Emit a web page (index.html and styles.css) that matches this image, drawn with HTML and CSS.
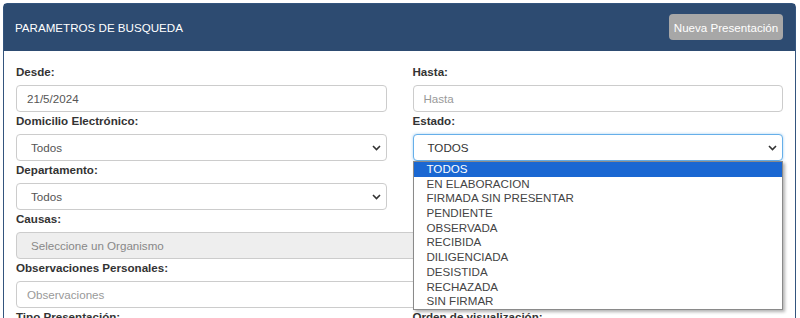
FILE: index.html
```html
<!doctype html>
<html>
	<head>
		<meta charset="utf-8" />
		<title>Parametros de busqueda</title>
		<link rel="stylesheet" href="styles.css">
	</head>
	<body>
		<div class="panel">
			<div class="panel-heading">
				<h3>PARAMETROS DE BUSQUEDA</h3>
				<button type="button" class="btn-new">Nueva Presentación</button>
			</div>
			<form class="panel-body">
				<div class="field">
					<label>Desde:</label>
					<div class="control">21/5/2024</div>
				</div>
				<div class="field">
					<label>Hasta:</label>
					<div class="control placeholder">Hasta</div>
				</div>

				<div class="field">
					<label>Domicilio Electrónico:</label>
					<div class="control select">
						<span>Todos</span>
						<svg width="9" height="6" viewBox="0 0 9 6"><path d="M1 1l3.5 3.5L8 1" fill="none" stroke="#333" stroke-width="1.6"/></svg>
					</div>
				</div>
				<div class="field dropdown">
					<label>Estado:</label>
					<div class="control select focus">
						<span>TODOS</span>
						<svg width="9" height="6" viewBox="0 0 9 6"><path d="M1 1l3.5 3.5L8 1" fill="none" stroke="#333" stroke-width="1.6"/></svg>
					</div>
					<ul class="options">
						<li class="active">TODOS</li>
						<li>EN ELABORACION</li>
						<li>FIRMADA SIN PRESENTAR</li>
						<li>PENDIENTE</li>
						<li>OBSERVADA</li>
						<li>RECIBIDA</li>
						<li>DILIGENCIADA</li>
						<li>DESISTIDA</li>
						<li>RECHAZADA</li>
						<li>SIN FIRMAR</li>
					</ul>
				</div>

				<div class="field">
					<label>Departamento:</label>
					<div class="control select">
						<span>Todos</span>
						<svg width="9" height="6" viewBox="0 0 9 6"><path d="M1 1l3.5 3.5L8 1" fill="none" stroke="#333" stroke-width="1.6"/></svg>
					</div>
				</div>
				<div class="field"></div>

				<div class="field wide">
					<label>Causas:</label>
					<div class="control select disabled">Seleccione un Organismo</div>
				</div>

				<div class="field wide">
					<label>Observaciones Personales:</label>
					<div class="control placeholder">Observaciones</div>
				</div>

				<div class="field">
					<label>Tipo Presentación:</label>
				</div>
				<div class="field">
					<label>Orden de visualización:</label>
				</div>
			</form>
		</div>
	</body>
</html>
```

FILE: styles.css
```css
* {
	box-sizing: border-box;
}

body {
	margin: 0;
	padding: 3px 4px 0 3px;
	font-family: "Liberation Sans", Arial, sans-serif;
	font-size: 11.6px;
	color: #333;
	background: #fff;
}

.panel {
	border: 1px solid #34557e;
	border-radius: 4px 4px 0 0;
	height: 320px;
}

.panel-heading {
	display: flex;
	align-items: center;
	justify-content: space-between;
	height: 47px;
	padding: 0 12px 0 11px;
	background: #2d4b71;
	color: #fff;
}

.panel-heading h3 {
	margin: 0;
	font-size: 11.6px;
	font-weight: normal;
}

.btn-new {
	appearance: none;
	border: none;
	border-radius: 4px;
	width: 114px;
	height: 26px;
	padding: 0;
	margin-top: -1px;
	background: #a7a7a7;
	color: #fff;
	font: inherit;
	font-size: 11.6px;
}

.panel-body {
	display: grid;
	grid-template-columns: 1fr 1fr;
	column-gap: 26px;
	padding: 12px 12px 0 12px;
}

.field {
	position: relative;
}

.field.wide {
	grid-column: span 2;
}

.field label {
	display: block;
	height: 22px;
	line-height: 18px;
	font-weight: bold;
}

.control {
	display: flex;
	align-items: center;
	height: 27px;
	padding: 0 10px;
	border: 1px solid #ccc;
	border-radius: 4px;
	background: #fff;
	color: #555;
}

.control.placeholder {
	color: #999;
}

.control.select {
	justify-content: space-between;
	padding: 0 5px 0 14px;
}

.control.select svg {
	margin-top: 1px;
}

.control.disabled {
	background: #eee;
	color: #888;
}

.control.focus {
	border-color: #66afe9;
	box-shadow: 0 0 3px rgba(102, 175, 233, 0.6);
	color: #333;
}

.options {
	position: absolute;
	top: 49px;
	left: 0;
	right: 0;
	margin: 0;
	padding: 0;
	list-style: none;
	background: #fff;
	border: 1px solid #8a8a8a;
	box-shadow: 2px 2px 3px rgba(0, 0, 0, 0.3);
	z-index: 2;
}

.options li {
	height: 14.7px;
	line-height: 14.7px;
	padding-left: 13px;
	color: #444;
}

.options li.active {
	background: #1a67d2;
	color: #fff;
}
```
